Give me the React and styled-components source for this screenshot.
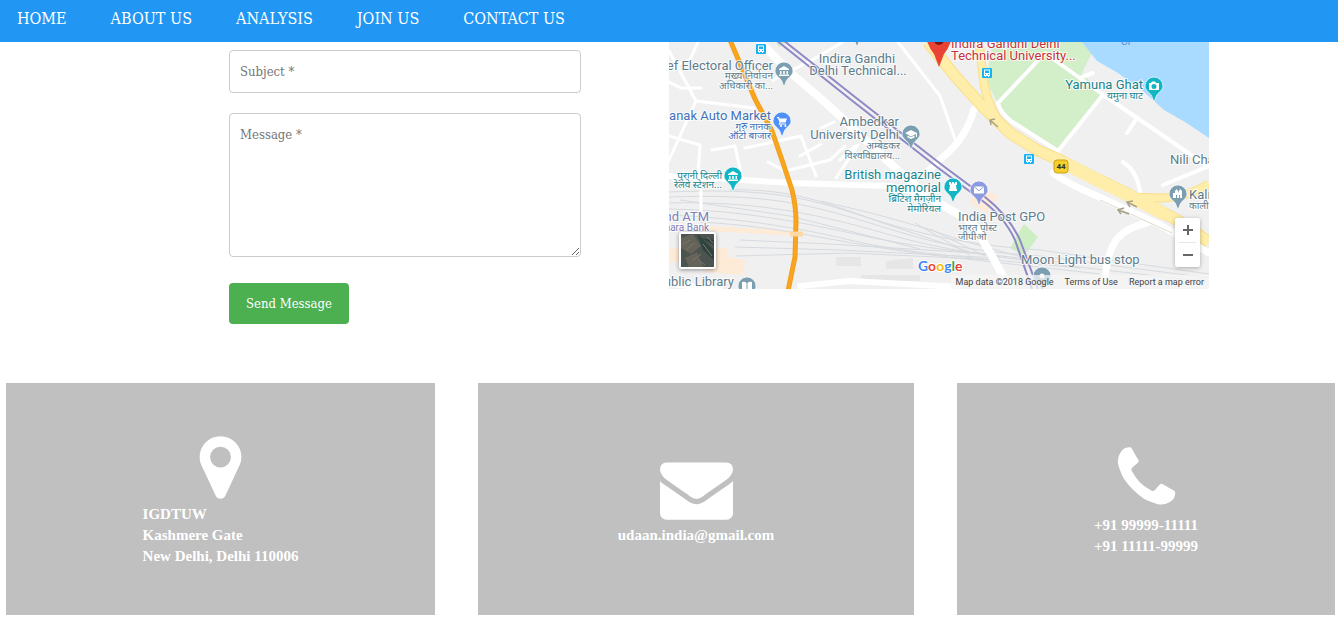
import React from "react";
import styled, { createGlobalStyle } from "styled-components";

const GlobalStyle = createGlobalStyle`
  *, *::before, *::after { box-sizing: border-box; }
  body {
    margin: 0;
    background: #fff;
    font-family: "DejaVu Serif Condensed", "DejaVu Serif", serif;
  }
`;

const Header = styled.header`
  position: sticky;
  top: 0;
  z-index: 10;
  background: #2196f3;
  padding: 8px 17px 13px;
`;

const NavList = styled.ul`
  display: flex;
  flex-wrap: wrap;
  gap: 0 44px;
  margin: 0;
  padding: 0;
  list-style: none;
`;

const NavLink = styled.a`
  display: block;
  color: #fff;
  font-size: 16px;
  line-height: 21px;
  text-decoration: none;
`;

const ContactSection = styled.section`
  display: grid;
  grid-template-columns: 352fr 540fr;
  gap: 88px;
  max-width: 1080px;
  margin-left: auto;
  margin-right: auto;
  padding-left: 100px;
`;

const Form = styled.form`
  display: flex;
  flex-direction: column;
  align-items: flex-start;
  padding-top: 8px;
`;

const Field = styled.input`
  width: 100%;
  height: 43px;
  margin: 0 0 20px;
  padding: 10px;
  border: 1px solid #ccc;
  border-radius: 4px;
  background: #fff;
  font-family: inherit;
  font-size: 13px;
  line-height: 21px;
  color: #333;
  &::placeholder { color: #757575; opacity: 1; }
`;

const MessageField = styled(Field)`
  display: block;
  height: 144px;
  margin-bottom: 26px;
  resize: vertical;
`;

const SendButton = styled.button`
  padding: 10px 17px;
  border: 0;
  border-radius: 4px;
  background: #4caf50;
  color: #fff;
  font-family: inherit;
  font-size: 13px;
  line-height: 21px;
  white-space: nowrap;
`;

const MapFrame = styled.div`
  position: relative;
  height: 247px;
  overflow: hidden;
  background: #f0f0f1;
  font-family: Roboto, "Noto Sans", sans-serif;
`;

const MapDrawing = styled.svg`
  display: block;
  width: 100%;
  height: 100%;
`;

const Satellite = styled.button`
  position: absolute;
  left: 10px;
  bottom: 20px;
  width: 37px;
  height: 37px;
  padding: 0;
  border: 2px solid #fff;
  border-radius: 2px;
  box-shadow: 0 1px 4px rgba(0, 0, 0, 0.4);
  background: #4b5550;
  svg { display: block; width: 100%; height: 100%; }
`;

const ZoomControl = styled.div`
  position: absolute;
  right: 9px;
  bottom: 22px;
  display: flex;
  flex-direction: column;
  width: 25px;
  border-radius: 2px;
  background: #fff;
  box-shadow: 0 1px 4px rgba(0, 0, 0, 0.3);
`;

const ZoomButton = styled.button`
  display: grid;
  place-items: center;
  height: 24px;
  padding: 0;
  border: 0;
  background: none;
  & + & { height: 25px; margin: 0 4px; border-top: 1px solid #e6e6e6; }
`;

const Attribution = styled.div`
  position: absolute;
  right: 0;
  bottom: 0;
  display: flex;
  gap: 11px;
  padding: 0 5px;
  background: rgba(245, 245, 245, 0.75);
  color: #444;
  font-size: 9px;
  line-height: 14px;
  white-space: nowrap;
  a { color: inherit; text-decoration: none; }
`;

const Cards = styled.section`
  display: grid;
  grid-template-columns: 429fr 436fr 378fr;
  gap: 43px;
  padding: 59px 3px 18px 6px;
`;

const Card = styled.article`
  display: flex;
  flex-direction: column;
  align-items: center;
  justify-content: center;
  min-height: 232px;
  background: #c0c0c0;
  color: #fff;
`;

const CardIcon = styled.svg`
  display: block;
  width: 73px;
  height: 73px;
  fill: #fff;
`;

const CardText = styled.address`
  font-family: "Liberation Serif", serif;
  font-size: 15px;
  font-weight: 700;
  font-style: normal;
  line-height: 21px;
  a { color: inherit; text-decoration: none; }
`;

const MapLabel = styled.text`
  fill: ${(p) => p.$color || "#607d8b"};
  stroke: #fff;
  stroke-width: 2px;
  stroke-opacity: 0.8;
  stroke-linejoin: round;
  paint-order: stroke;
  font-size: ${(p) => (p.$small ? 10 : 13)}px;
`;

const links = ["HOME", "ABOUT US", "ANALYSIS", "JOIN US", "CONTACT US"];

const cards = [
  {
    id: "address",
    icon: "M1152 640q0-106-75-181t-181-75-181 75-75 181 75 181 181 75 181-75 75-181zm256 0q0 109-33 179l-364 774q-16 33-47.5 52t-67.5 19-67.5-19-46.5-52l-365-774q-33-70-33-179 0-212 150-362t362-150 362 150 150 362z",
    lines: ["IGDTUW", "Kashmere Gate", "New Delhi, Delhi 110006"],
  },
  {
    id: "email",
    icon: "M1792 710v794q0 66-47 113t-113 47h-1472q-66 0-113-47t-47-113v-794q44 49 101 87 362 246 497 345 57 42 92.5 65.5t94.5 48 110 24.5h2q51 0 110-24.5t94.5-48 92.5-65.5q170-123 498-345 57-39 100-87zm0-294q0 79-49 151t-122 123q-376 261-468 325-10 7-42.5 31t-54 38.5-52 32.5-57.5 27-50 9h-2q-23 0-50-9t-57.5-27-52-32.5-54-38.5-42.5-31q-91-64-262-182.5t-205-142.5q-62-42-117-115.5t-55-136.5q0-78 41.5-130t118.500-52h1472q65 0 112.500 47t47.500 113z",
    lines: ["udaan.india@gmail.com"],
  },
  {
    id: "phone",
    icon: "M1600 1240q0 27-10 70.5t-21 68.5q-21 50-122 106-94 51-186 51-27 0-53-3.5t-57.5-12.5-47-14.5-55.5-20.5-49-18q-98-35-175-83-127-79-264-216t-216-264q-48-77-83-175-3-9-18-49t-20.5-55.5-14.5-47-12.5-57.5-3.5-53q0-92 51-186 56-101 106-122 25-11 68.5-21t70.5-10q14 0 21 3 18 6 53 76 11 19 30 54t35 63.5 31 53.5q3 4 17.5 25t21.5 35.5 7 28.5q0 20-28.5 50t-62 55-62 53-28.5 46q0 9 5 22.5t8.5 20.5 14 24 11.5 19q76 137 174 235t235 174q2 1 19 11.5t24 14 20.5 8.5 22.5 5q18 0 46-28.5t53-62 55-62 50-28.5q14 0 28.5 7t35.5 21.5 25 17.5q25 15 53.5 31t63.5 35 54 30q70 35 76 53 3 7 3 21z",
    lines: ["+91 99999-11111", "+91 11111-99999"],
  },
];

const TEAL = "#12b5c4";
const TEAL_TEXT = "#16858e";
const SLATE = "#7b9eb0";
const BLUE_TEXT = "#4272b8";

const glyphs = {
  museum: <path d="M-5-2 0-5 5-2v1H-5zM-4 0h1.500v3H-4zM-.8 0H.8v3H-.8zM2.500 0H4v3H2.500zM-5 3.500H5V5H-5z" fill="#fff" />,
  cart: <path d="M-5-4h2l.5 1.500H5L3.500 1.500H-1.500l-.5 1H4v1h-7.500l1-2L-4-3h-1zM-1.500 4a1 1 0 1 1 0 1.800 1 1 0 0 1 0-1.800zM3 4a1 1 0 1 1 0 1.800A1 1 0 0 1 3 4z" fill="#fff" />,
  cap: <path d="M-6-1 0-4 6-1v4H5V0L0 2.500zM-3.500 1.500 0 3.200l3.500-1.700v2L0 5l-3.500-1.500z" fill="#fff" />,
  camera: <path fillRule="evenodd" d="M-5-3h2l1-1.500h3L2-3h3v7H-5zM0-2a2.500 2.500 0 1 0 0 5 2.500 2.500 0 0 0 0-5z" fill="#fff" />,
  rook: <path d="M-4-5h2v1.500h1V-5h2v1.500h1V-5h2v3H3L3.500 2H4v2h-8V2h.5L-3-2h-1z" fill="#fff" />,
  mail: <path d="M-5-3.500H5v7H-5z" fill="#fff" stroke="none" />,
  city: <path d="M-5-1h2v-2l1.500-2L0-3v2l2-4 2 2v7H2V1H1v3h-2V1h-1v3h-3z" fill="#fff" />,
  book: <path d="M-5-4q3-1 4.500 1v7Q-2 3-5 4zM5-4Q2-5 .5-3v7Q2 3 5 4z" fill="#fff" />,
  dot: <circle r="2.500" fill="#fff" />,
};

const pins = [
  [784, 71, SLATE, "museum"],
  [782, 121, "#4f8ff7", "cart"],
  [911, 134, SLATE, "cap"],
  [733, 176, TEAL, "museum"],
  [1154, 86, TEAL, "camera"],
  [953, 187, TEAL, "rook"],
  [979, 190, "#8c9ae0", "mail"],
  [1178, 194, SLATE, "city"],
  [747, 286, SLATE, "book"],
  [1042, 276, SLATE, "dot"],
  [857, 31, SLATE, "dot"],
];

const labels = [
  [773, 70, "Chief Electoral Officer", "end"],
  [773, 79, "मुख्य निर्वाचन", "end", null, true],
  [773, 89, "अधिकारी का...", "end", null, true],
  [771, 120, "Nanak Auto Market", "end", BLUE_TEXT],
  [771, 130, "गुरु नानक", "end", BLUE_TEXT, true],
  [771, 139, "ऑटो बाजार", "end", BLUE_TEXT, true],
  [857, 63, "Indira Gandhi", "middle"],
  [858, 75, "Delhi Technical...", "middle"],
  [899, 126, "Ambedkar", "end"],
  [899, 139, "University Delhi", "end"],
  [900, 149, "अम्बेडकर", "end", null, true],
  [900, 159, "विश्वविद्यालय...", "end", null, true],
  [722, 179, "पुरानी दिल्ली", "end", TEAL_TEXT, true],
  [722, 188, "रेलवे स्टेशन...", "end", TEAL_TEXT, true],
  [941, 179, "British magazine", "end", TEAL_TEXT],
  [941, 192, "memorial", "end", TEAL_TEXT],
  [941, 202, "ब्रिटिश मैगज़ीन", "end", TEAL_TEXT, true],
  [941, 212, "मेमोरियल", "end", TEAL_TEXT, true],
  [951, 48, "Indira Gandhi Delhi", "start", "#c5333a"],
  [951, 60, "Technical University...", "start", "#c5333a"],
  [1143, 89, "Yamuna Ghat", "end", TEAL_TEXT],
  [1143, 99, "यमुना घाट", "end", TEAL_TEXT, true],
  [1170, 164, "Nili Chatri", "start"],
  [1189, 199, "Kali Mandir", "start"],
  [1189, 209, "काली मंदिर", "start", null, true],
  [958, 221, "India Post GPO", "start"],
  [958, 231, "भारत पोस्ट", "start", null, true],
  [958, 240, "जीपीओ", "start", null, true],
  [709, 221, "nd ATM", "end", "#7d80b5"],
  [709, 231, "Canara Bank", "end", "#7d80b5", true],
  [734, 286, "Public Library", "end"],
  [1021, 264, "Moon Light bus stop", "start"],
];

const tracks = [
  "M669 192 C760 188 800 196 850 212 S950 244 1040 250 L1209 274",
  "M669 197 C760 194 800 202 860 220 S950 250 1040 256 L1209 278",
  "M669 203 C750 201 810 212 880 232 S980 256 1209 282",
  "M669 209 C740 210 800 222 860 235 S960 252 1060 262",
  "M669 215 C740 218 800 228 850 240 S950 256 1080 268",
  "M700 222 C770 226 810 236 870 246 S960 258 1100 274",
  "M730 190 C790 188 830 204 880 222 L970 252",
  "M820 201 C860 210 910 222 960 240 L1040 262",
  "M740 240 L830 244 L990 254",
  "M735 247 L840 250 L1000 258",
  "M735 256 L850 253 L1000 260",
  "M680 200 L790 216 L920 249",
  "M915 223 L970 255",
  "M930 229 L985 256",
];

function MapPin({ x, y, color, glyph }) {
  return (
    <g transform={`translate(${x} ${y})`}>
      <path
        d="M0-9a9 9 0 0 1 9 9C9 4 5 6 2.500 9.500L0 16l-2.500-6.500C-5 6-9 4-9 0a9 9 0 0 1 9-9z"
        fill={color}
        stroke="#fff"
        strokeWidth="0.700"
      />
      {glyphs[glyph]}
      {glyph === "mail" && <path d="M-5-3.500 0 .8 5-3.500" fill="none" stroke={color} />}
    </g>
  );
}

function BusStop({ x, y }) {
  return (
    <g transform={`translate(${x} ${y})`}>
      <rect x="-5" y="-5" width="10" height="10" rx="1" fill="#15b3f3" />
      <path fillRule="evenodd" d="M-3-3.500h6v6.500H2v1H1V3h-2v1h-1V3h-1zM-2-2.500v2.500h4v-2.500zM-2 1h1v1h-1zM1 1h1v1H1z" fill="#fff" />
    </g>
  );
}

function CampusMap() {
  return (
    <MapDrawing viewBox="669 42 540 247" preserveAspectRatio="xMidYMid slice" role="img" aria-label="Map of Kashmere Gate, Delhi">
      <rect x="669" y="42" width="540" height="247" fill="#f0f0f1" />
      <path d="M669 248H728L727 257 745 260 743 275 705 272 704 262H669zM707 226 800 231V236L707 231zM976 186 998 196 987 213 970 203z" fill="#fdebd7" />
      <path d="M836 257H861V266H836zM886 261 913 258V269H886zM861 275H920V281H861z" fill="#e6e6e7" />
      <path d="M993 42H1083L1092 53 1082 73 1103 96 1059 152 1020 128 1000 108 986 80z" fill="#d3efc9" />
      <path d="M1024 224 1038 237 1024 256 1010 248zM776 42H786L779 47z" fill="#cdeec3" />
      <path d="M1082 42 1097 61 1118 73 1143 91 1164 110 1185 122 1209 138V42z" fill="#a9daff" />

      <g fill="none" stroke="#d6dade" strokeWidth="1">
        {tracks.map((d) => (
          <path key={d} d={d} />
        ))}
      </g>

      <g fill="none" stroke="#fff" strokeLinejoin="round" strokeLinecap="round">
        <path strokeWidth="3" d="M669 51 696 101 680 136 669 160M696 101 754 108M669 82 681 88H701M669 67 690 60 698 42M745 148 801 136 816 176M669 136 700 145 698 175M712 150 735 146 742 178M768 162 785 171 830 160 845 146M773 80 812 60 843 42M790 73 782 66M858 145 836 178M800 156 821 144M821 128 834 122M898 42 940 96 955 139M840 160 855 146M701 190V214" />
        <path strokeWidth="6" d="M669 176 793 183 890 186 930 196M669 284 720 289" />
        <path strokeWidth="8" d="M760 42 792 74 827 104 858 133 893 166 930 198 972 222 992 256 1010 289" />
        <path strokeWidth="7" d="M974 109C969 128 960 143 944 156L930 169" />
        <path strokeWidth="4" d="M1045 53 998 103Q1000 112 1011 121L1058 151 1102 96M1045 53 1102 94 1209 167M1082 77 1093 73M1135 121 1127 133M1123 162Q1139 172 1141 199M1163 185 1209 166" />
        <path strokeWidth="7" d="M1053 173Q1068 184 1097 196L1160 225 1209 253M1147 223C1116 230 1107 244 1104 289" />
        <path strokeWidth="6" d="M800 286 850 281 960 287" />
      </g>

      <g fill="none" strokeLinejoin="round">
        <path stroke="#fbdf8a" strokeWidth="12" d="M928 42 955 76 984 108 1010 133 1037 150 1062 161 1097 179 1130 195 1177 220 1209 242" />
        <path stroke="#fbdf8a" strokeWidth="9" d="M979 42 983 76Q985 99 998 120M1125 197 1163 198Q1188 197 1209 184" />
        <path stroke="#feeeaa" strokeWidth="10" d="M928 42 955 76 984 108 1010 133 1037 150 1062 161 1097 179 1130 195 1177 220 1209 242" />
        <path stroke="#feeeaa" strokeWidth="7" d="M979 42 983 76Q985 99 998 120M1125 197 1163 198Q1188 197 1209 184" />
        <path stroke="#feeeaa" strokeWidth="13" d="M1064 163 1097 180 1130 196 1164 214" />
        <path stroke="#dedacb" d="M1100 200 1172 233" />
        <path stroke="#8e88c4" strokeWidth="2" d="M776 40 850 99 937 167 980 199Q1004 216 1015 240L1032 289M783 40 855 97 942 165 985 197Q1009 216 1020 240L1038 289" />
        <path stroke="#ef9f20" strokeWidth="5" d="M730 40 755 99 772 131 782 160 792 190Q796 206 796 222L795 257 788 291" />
        <path stroke="#f9a51d" strokeWidth="3" d="M730 40 755 99 772 131 782 160 792 190Q796 206 796 222L795 257 788 291" />
        <path stroke="#fdd9a5" strokeWidth="5" d="M790 234H803" />
      </g>

      <g fill="none" stroke="#a9a28a" strokeWidth="1.500">
        <path d="M998 127 990 120M995 119 990 120 991 125M1137 207 1127 202M1133 201 1127 202 1130 207M1129 214 1118 210M1124 208 1118 210 1121 214" />
      </g>

      <BusStop x={761} y={49} />
      <BusStop x={987} y={73} />
      <BusStop x={1029} y={159} />
      <rect x="1054" y="160" width="14" height="13" rx="3" fill="#f7cf2d" stroke="#c9a21a" />
      <text x="1061" y="169" textAnchor="middle" fontSize="8" fontWeight="700" fill="#333">44</text>

      {labels.map(([x, y, text, anchor, color, small]) => (
        <MapLabel key={text} x={x} y={y} textAnchor={anchor} $color={color} $small={small}>
          {text}
        </MapLabel>
      ))}
      <text x="1121" y="45" fontSize="11" fontStyle="italic" fill="#5b8fd0">Ci</text>
      {pins.map(([x, y, color, glyph]) => (
        <MapPin key={`${x}-${y}`} x={x} y={y} color={color} glyph={glyph} />
      ))}
      <path d="M925 34Q928 47 934 54L939 67 944 54Q950 47 953 34z" fill="#ea4335" />
      <circle cx="939" cy="40" r="5" fill="#811411" />

      <text x="918" y="271" fontFamily="Lato, sans-serif" fontSize="14" fontWeight="700" stroke="#fff" strokeWidth="2" paintOrder="stroke">
        <tspan fill="#4285f4">G</tspan>
        <tspan fill="#ea4335">o</tspan>
        <tspan fill="#fbbc05">o</tspan>
        <tspan fill="#4285f4">g</tspan>
        <tspan fill="#34a853">l</tspan>
        <tspan fill="#ea4335">e</tspan>
      </text>
    </MapDrawing>
  );
}

export default function App() {
  return (
    <>
      <GlobalStyle />
      <Header>
        <nav>
          <NavList>
            {links.map((label) => (
              <li key={label}>
                <NavLink href="#">{label}</NavLink>
              </li>
            ))}
          </NavList>
        </nav>
      </Header>
      <main>
        <ContactSection>
          <Form onSubmit={(e) => e.preventDefault()}>
            <Field type="text" name="subject" aria-label="Subject" placeholder="Subject *" />
            <MessageField as="textarea" name="message" aria-label="Message" placeholder="Message *" />
            <SendButton type="submit">Send Message</SendButton>
          </Form>
          <MapFrame>
            <CampusMap />
            <Satellite type="button" aria-label="Show satellite imagery">
              <svg viewBox="0 0 33 33" aria-hidden="true">
                <rect width="33" height="33" fill="#4b544e" />
                <path d="M0 4 12 0 20 12 10 20 0 14zM4 24 16 18 22 33H8z" fill="#66645a" />
                <path d="M16 0 33 16V26L22 16zM20 4 33 6V11z" fill="#2f443f" />
                <path d="M2 10 9 6M5 16 13 9M11 27 20 20M22 10 31 22M17 26 24 31M26 3 32 9" stroke="#7b776b" fill="none" />
              </svg>
            </Satellite>
            <ZoomControl>
              <ZoomButton type="button" aria-label="Zoom in">
                <svg width="10" height="10" viewBox="0 0 10 10" aria-hidden="true">
                  <path d="M4 0h2v4h4v2H6v4H4V6H0V4h4z" fill="#666" />
                </svg>
              </ZoomButton>
              <ZoomButton type="button" aria-label="Zoom out">
                <svg width="10" height="2" viewBox="0 0 10 2" aria-hidden="true">
                  <path d="M0 0h10v2H0z" fill="#666" />
                </svg>
              </ZoomButton>
            </ZoomControl>
            <Attribution>
              <span>Map data ©2018 Google</span>
              <a href="#">Terms of Use</a>
              <a href="#">Report a map error</a>
            </Attribution>
          </MapFrame>
        </ContactSection>
        <Cards>
          {cards.map(({ id, icon, lines }) => (
            <Card key={id}>
              <CardIcon viewBox="0 0 1792 1792" aria-hidden="true">
                <path d={icon} />
              </CardIcon>
              <CardText>
                {lines.map((line) => (
                  <div key={line}>{line}</div>
                ))}
              </CardText>
            </Card>
          ))}
        </Cards>
      </main>
    </>
  );
}
